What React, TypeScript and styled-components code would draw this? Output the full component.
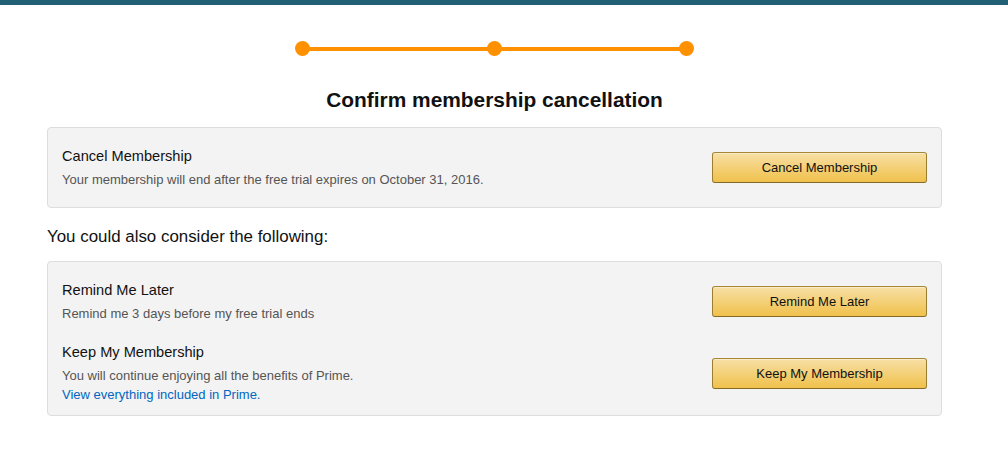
import React from "react";
import styled, { createGlobalStyle } from "styled-components";

const GlobalStyle = createGlobalStyle`
  html, body { margin: 0; padding: 0; background: #fff; }
  body { font-family: Arial, "Liberation Sans", sans-serif; color: #111; }
`;

const TopBar = styled.div`
  height: 5px;
  background: #215f75;
`;

const Page = styled.div`
  width: 895px;
  margin-left: 47px;
  display: flex;
  flex-direction: column;
`;

const Progress = styled.div`
  align-self: center;
  display: flex;
  align-items: center;
  margin-top: 36px;
  height: 15px;
`;

const Dot = styled.span`
  width: 15px;
  height: 15px;
  border-radius: 50%;
  background: #ff9000;
  flex: none;
`;

const Line = styled.span`
  width: 179px;
  height: 4px;
  background: #ff9000;
  margin: 0 -1px;
`;

const Title = styled.h1`
  margin: 32px 0 15px;
  font-size: 20.9px;
  line-height: 24px;
  font-weight: 700;
  text-align: center;
  color: #111;
`;

const Box = styled.div<{ $pt: number; $pb: number }>`
  background: #f3f3f3;
  border: 1px solid #dddddd;
  border-radius: 4px;
  padding: ${(p) => p.$pt}px 14px ${(p) => p.$pb}px 14px;
  display: flex;
  flex-direction: column;
  gap: 20px;
`;

const Row = styled.div`
  display: flex;
  align-items: center;
  justify-content: space-between;
`;

const Info = styled.div`
  display: flex;
  flex-direction: column;
`;

const ItemTitle = styled.div`
  font-size: 14.6px;
  line-height: 18px;
  color: #111;
`;

const ItemText = styled.div`
  font-size: 13px;
  line-height: 18px;
  color: #555;
  margin-top: 6px;
`;

const Link = styled.a`
  font-size: 13px;
  line-height: 18px;
  color: #0066c0;
  text-decoration: none;
  margin-top: 1px;
`;

const Button = styled.button`
  width: 215px;
  height: 31px;
  margin-bottom: 1px;
  flex: none;
  border: 1px solid;
  border-color: #a88734 #9c7e31 #846a29;
  border-radius: 3px;
  background: linear-gradient(to bottom, #f7dfa5, #f0c14b);
  box-shadow: inset 0 1px 0 rgba(255, 255, 255, 0.4);
  font-family: Arial, "Liberation Sans", sans-serif;
  font-size: 13px;
  color: #111;
  cursor: pointer;
  padding: 0;
`;

const Subheading = styled.div`
  font-size: 16.9px;
  line-height: 20px;
  color: #111;
  margin: 19px 0 14px;
`;

export default function App() {
  return (
    <>
      <GlobalStyle />
      <TopBar />
      <Page>
        <Progress>
          <Dot />
          <Line />
          <Dot />
          <Line />
          <Dot />
        </Progress>
        <Title>Confirm membership cancellation</Title>
        <Box $pt={19} $pb={18}>
          <Row>
            <Info>
              <ItemTitle>Cancel Membership</ItemTitle>
              <ItemText>Your membership will end after the free trial expires on October 31, 2016.</ItemText>
            </Info>
            <Button>Cancel Membership</Button>
          </Row>
        </Box>
        <Subheading>You could also consider the following:</Subheading>
        <Box $pt={19} $pb={11}>
          <Row>
            <Info>
              <ItemTitle>Remind Me Later</ItemTitle>
              <ItemText>Remind me 3 days before my free trial ends</ItemText>
            </Info>
            <Button>Remind Me Later</Button>
          </Row>
          <Row>
            <Info>
              <ItemTitle>Keep My Membership</ItemTitle>
              <ItemText>You will continue enjoying all the benefits of Prime.</ItemText>
              <Link href="#">View everything included in Prime.</Link>
            </Info>
            <Button>Keep My Membership</Button>
          </Row>
        </Box>
      </Page>
    </>
  );
}
